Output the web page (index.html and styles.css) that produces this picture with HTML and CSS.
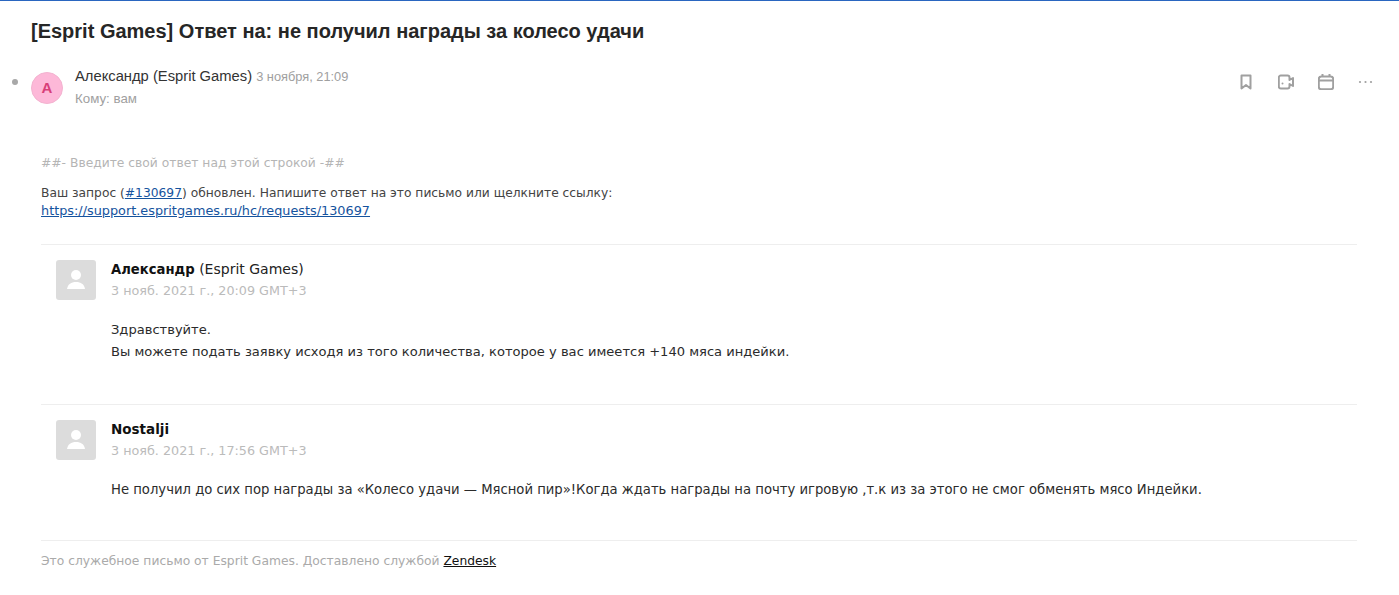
FILE: index.html
```html
<!DOCTYPE html>
<html lang="ru">
<head>
<meta charset="utf-8">
<title>Письмо</title>
<link rel="stylesheet" href="styles.css">
</head>
<body>
<main class="mail">
  <h1 class="subject">[Esprit Games] Ответ на: не получил награды за колесо удачи</h1>
  <header class="head">
    <span class="dot"></span>
    <span class="avatar">А</span>
    <div class="meta">
      <div class="from">Александр (Esprit Games) <span class="date">3 ноября, 21:09</span></div>
      <div class="to">Кому: вам</div>
    </div>
    <div class="tools">
      <svg class="tool" viewBox="0 0 16 16"><path d="M3.500 1.500h9v13L8 11l-4.500 3.500z"/></svg>
      <svg class="tool" viewBox="0 0 16 16"><path d="M11.500 6V3.500a2 2 0 0 0-2-2H2.800a2 2 0 0 0-2 2v9a2 2 0 0 0 2 2h6.700a2 2 0 0 0 2-2V10l3.500 2V4z"/><circle class="mark" cx="4.500" cy="9.500" r="1"/></svg>
      <svg class="tool" viewBox="0 0 16 16"><rect x=".8" y="2.500" width="14.400" height="12.700" rx="2.500"/><path d="M.8 6.500h14.400M4.500 0v2.500M11.500 0v2.500"/></svg>
      <svg class="tool dots" viewBox="0 0 16 16"><circle cx="2" cy="8" r="1.100"/><circle cx="7.500" cy="8" r="1.100"/><circle cx="13" cy="8" r="1.100"/></svg>
    </div>
  </header>

  <section class="body">
    <p class="hint">##- Введите свой ответ над этой строкой -##</p>
    <p class="lead">Ваш запрос (<a href="#">#130697</a>) обновлен. Напишите ответ на это письмо или щелкните ссылку:<br><a class="url" href="#">https://support.espritgames.ru/hc/requests/130697</a></p>

    <article class="comment first">
      <div class="pic"><svg viewBox="0 0 40 40"><circle cx="20" cy="15" r="5"/><path d="M11 29c1-5 4-7 9-7s8 2 9 7z"/></svg></div>
      <div class="content">
        <div class="who"><b>Александр</b> (Esprit Games)</div>
        <div class="when">3 нояб. 2021 г., 20:09 GMT+3</div>
        <p class="text">Здравствуйте.<br>Вы можете подать заявку исходя из того количества, которое у вас имеется +140 мяса индейки.</p>
      </div>
    </article>

    <article class="comment second">
      <div class="pic"><svg viewBox="0 0 40 40"><circle cx="20" cy="15" r="5"/><path d="M11 29c1-5 4-7 9-7s8 2 9 7z"/></svg></div>
      <div class="content">
        <div class="who"><b class="latin">Nostalji</b></div>
        <div class="when">3 нояб. 2021 г., 17:56 GMT+3</div>
        <p class="text wide">Не получил до сих пор награды за «Колесо удачи — Мясной пир»!Когда ждать награды на почту игровую ,т.к из за этого не смог обменять мясо Индейки.</p>
      </div>
    </article>

    <footer class="foot">Это служебное письмо от Esprit Games. Доставлено службой <a href="#">Zendesk</a></footer>
  </section>
</main>
</body>
</html>
```

FILE: styles.css
```css
* { box-sizing: border-box; }
html, body { margin: 0; padding: 0; }
body {
  width: 1399px;
  height: 595px;
  overflow: hidden;
  background: #fff;
  border-top: 1px solid #2a66c0;
  font-family: "Liberation Sans", Arial, sans-serif;
}
.mail { padding: 0 25px 0 0; }
.subject {
  margin: 18px 0 0 31px;
  font-size: 20px;
  line-height: 24px;
  font-weight: 700;
  color: #262626;
}
.head {
  display: flex;
  align-items: flex-start;
  margin-top: 16px;
  height: 73px;
}
.dot {
  width: 6px;
  height: 6px;
  margin: 20px 0 0 12px;
  border-radius: 50%;
  background: #a8a8a8;
}
.avatar {
  width: 32px;
  height: 32px;
  margin: 13px 0 0 13px;
  border-radius: 50%;
  background: #fdb8d8;
  border: 1px solid #f3b3d0;
  color: #d83f78;
  font-size: 15px;
  font-weight: 700;
  line-height: 30px;
  text-align: center;
}
.meta { flex: 1; margin-left: 12px; padding-top: 7px; }
.from { font-size: 14.750px; line-height: 20px; color: #333; }
.date { font-size: 12.800px; color: #a0a0a0; }
.to { margin-top: 3px; font-size: 13.300px; line-height: 18px; color: #a0a0a0; }
.tools { display: flex; gap: 24px; margin: 15px 0 0; }
.tool {
  width: 16px;
  height: 16px;
  fill: none;
  stroke: #a0a0a0;
  stroke-width: 2;
  stroke-linejoin: round;
}
.tool .mark { fill: #a0a0a0; stroke: none; }
.dots { fill: #a0a0a0; stroke: none; }
.body {
  margin: 0 17px 0 41px;
  font-family: "DejaVu Sans", Verdana, sans-serif;
  font-size: 12.300px;
  color: #2b2b2b;
}
.body a { color: #15539e; }
.hint { margin: 0; padding-top: 22px; line-height: 18px; color: #b5b5b5; }
.lead { margin: 12px 0 0; line-height: 18px; font-size: 12.280px; color: #444; }
.lead .url { font-size: 12.830px; }
.comment {
  display: flex;
  border-top: 1px solid #eeeeee;
}
.first { margin-top: 24px; height: 160px; }
.second { height: 136px; }
.pic {
  width: 40px;
  height: 40px;
  margin: 15px 15px 0 15px;
  border-radius: 3px;
  background: #dcdcdc;
}
.pic svg { display: block; width: 40px; height: 40px; fill: #fff; }
.content { flex: 1; padding-top: 15px; }
.who { font-size: 14px; line-height: 19px; color: #222; }
.who b { color: #111; font-size: 13.200px; }
.who .latin { font-size: 13.500px; }
.when { margin-top: 3px; font-size: 12.760px; line-height: 18px; color: #bbb; }
.text { margin: 19px 0 0; font-size: 13.070px; line-height: 22px; color: #2b2b2b; }
.text.wide { font-size: 13.200px; }
.foot {
  border-top: 1px solid #eeeeee;
  padding-top: 11px;
  font-size: 12.300px;
  line-height: 18px;
  color: #aaa;
}
.foot a { color: #111; }
```
